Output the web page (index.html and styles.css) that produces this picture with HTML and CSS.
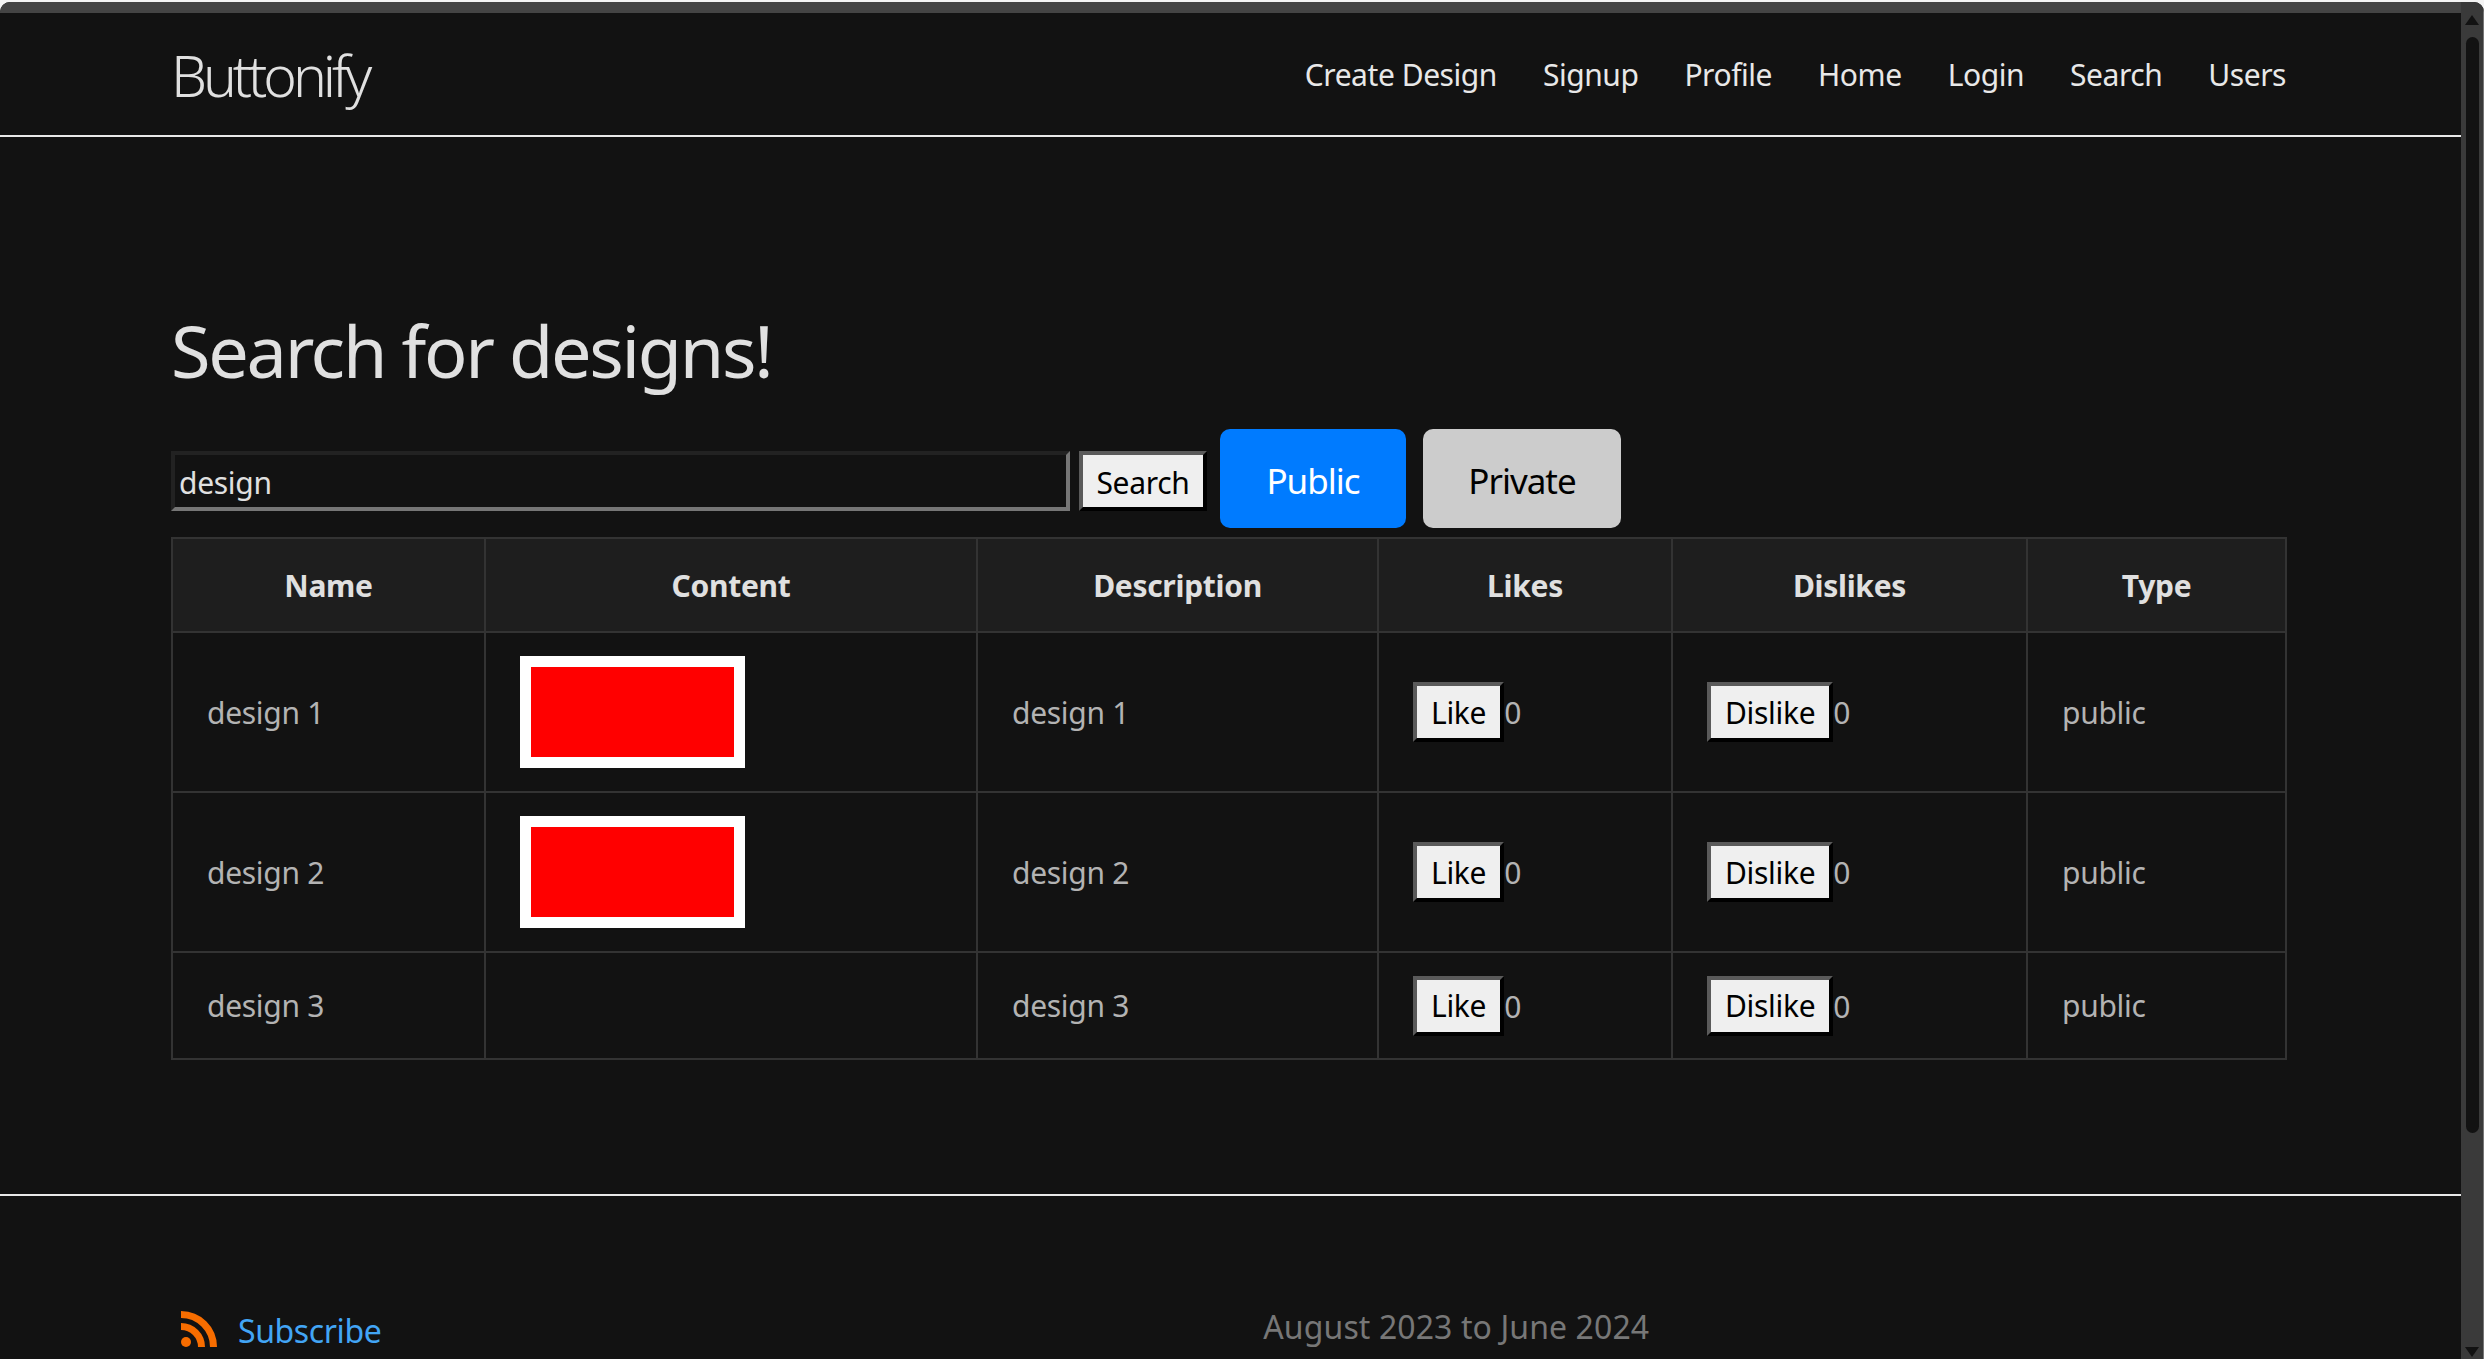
FILE: index.html
```html
<!DOCTYPE html>
<html lang="en">
<head>
<meta charset="utf-8">
<title>Buttonify</title>
<link rel="stylesheet" href="styles.css">
</head>
<body>
<div class="window">
  <div class="page">
    <div class="titlebar"></div>
    <header class="site-header">
      <a class="brand">Buttonify</a>
      <nav class="nav">
        <a>Create Design</a><a>Signup</a><a>Profile</a><a>Home</a><a>Login</a><a>Search</a><a>Users</a>
      </nav>
    </header>
    <main class="content">
      <h1 class="title">Search for designs!</h1>
      <div class="toolbar">
        <input class="search-input" type="text" value="design">
        <button class="native-btn">Search</button>
        <button class="filter filter-public">Public</button>
        <button class="filter filter-private">Private</button>
      </div>
      <table class="designs">
        <colgroup>
          <col class="c1"><col class="c2"><col class="c3"><col class="c4"><col class="c5"><col class="c6">
        </colgroup>
        <thead>
          <tr><th>Name</th><th>Content</th><th>Description</th><th>Likes</th><th>Dislikes</th><th>Type</th></tr>
        </thead>
        <tbody>
          <tr>
            <td>design 1</td>
            <td><div class="swatch"></div></td>
            <td>design 1</td>
            <td><button class="native-btn">Like</button><span class="count">0</span></td>
            <td><button class="native-btn">Dislike</button><span class="count">0</span></td>
            <td>public</td>
          </tr>
          <tr>
            <td>design 2</td>
            <td><div class="swatch"></div></td>
            <td>design 2</td>
            <td><button class="native-btn">Like</button><span class="count">0</span></td>
            <td><button class="native-btn">Dislike</button><span class="count">0</span></td>
            <td>public</td>
          </tr>
          <tr>
            <td>design 3</td>
            <td></td>
            <td>design 3</td>
            <td><button class="native-btn">Like</button><span class="count">0</span></td>
            <td><button class="native-btn">Dislike</button><span class="count">0</span></td>
            <td>public</td>
          </tr>
        </tbody>
      </table>
    </main>
    <footer class="site-footer">
      <a class="subscribe">
        <svg class="rss" viewBox="0 0 36 36" width="36" height="36" aria-hidden="true">
          <circle cx="5" cy="31" r="5" fill="#f76d00"/>
          <path d="M0 15.5 A20.5 20.5 0 0 1 20.5 36" fill="none" stroke="#f76d00" stroke-width="7"/>
          <path d="M0 3.5 A32.5 32.5 0 0 1 32.5 36" fill="none" stroke="#f76d00" stroke-width="7"/>
        </svg>
        <span class="subscribe-label">Subscribe</span>
      </a>
      <p class="dates">August 2023 to June 2024</p>
    </footer>
  </div>
  <aside class="scrollbar">
    <div class="arrow arrow-up"></div>
    <div class="thumb"></div>
    <div class="arrow arrow-down"></div>
  </aside>
</div>
</body>
</html>
```
FILE: styles.css
```css
* { box-sizing: border-box; }
html, body { margin: 0; height: 100%; overflow: hidden; background: #f4f4f4; }
body {
  padding-top: 2px;
  font-family: "Noto Sans", "Open Sans", sans-serif;
  font-size: 30px;
  color: #e0e0e0;
}
.window {
  height: 100%;
  display: flex;
  background: #121212;
  border-radius: 10px 10px 0 0;
  overflow: hidden;
}
.page { flex: 1; min-width: 0; display: flex; flex-direction: column; }
.titlebar { height: 11px; flex: none; background: #444; }

.site-header {
  height: 124px;
  flex: none;
  display: flex;
  justify-content: space-between;
  padding: 0 175px 0 171px;
  border-bottom: 2px solid #e8e8e8;
}
.brand {
  margin-top: 27px;
  font-size: 57px;
  font-weight: 300;
  line-height: 70px;
  height: 70px;
  letter-spacing: -4.1px;
  color: #e0e0e0;
}
.nav {
  display: flex;
  gap: 46px;
  margin-top: 39px;
  height: 46px;
  line-height: 46px;
  letter-spacing: -.45px;
  color: #e8e8e8;
}

.content { flex: none; height: 1057px; padding: 0 175px 0 171px; }
.title {
  margin: 0;
  padding-top: 165px;
  height: 292px;
  font-size: 72px;
  font-weight: 400;
  line-height: 96px;
  letter-spacing: -2.3px;
  color: #e0e0e0;
}
.toolbar { display: flex; align-items: flex-start; height: 99px; }
.search-input {
  width: 899px;
  height: 60px;
  margin: 22px 9px 0 0;
  padding: 2px 4px 0;
  border: 4px solid;
  border-color: #222 #767676 #767676 #222;
  background: #121212;
  color: #e0e0e0;
  font: inherit;
  letter-spacing: -.3px;
}
.native-btn {
  height: 60px;
  padding: 0 14px;
  border: 4px solid;
  border-color: #5a5a5a #000 #000 #5a5a5a;
  background: #efefef;
  color: #000;
  font: inherit;
  letter-spacing: -.3px;
}
.filter {
  height: 99px;
  padding: 4px 0 0;
  border: 0;
  border-radius: 10px;
  font: inherit;
  font-size: 35px;
  letter-spacing: -1px;
}
.toolbar .native-btn { width: 128px; padding: 2px 0 0; margin-top: 22px; }
.filter-public { width: 186px; margin-left: 13px; background: #007bff; color: #fff; }
.filter-private { width: 198px; margin-left: 17px; background: #ccc; color: #000; }

.designs {
  width: 2114px;
  margin-top: 9px;
  border-collapse: collapse;
  table-layout: fixed;
}
.c1 { width: 313px; }
.c2 { width: 492px; }
.c3 { width: 401px; }
.c4 { width: 294px; }
.c5 { width: 355px; }
.c6 { width: 259px; }
.designs th, .designs td { border: 2px solid #333; padding: 0 34px; letter-spacing: -.3px; }
.designs th { height: 94px; background: #1e1e1e; text-align: center; font-weight: 700; color: #e0e0e0; }
.designs td { height: 107px; color: #b3b3b3; vertical-align: middle; }
.designs tbody tr:nth-child(-n+2) td { height: 160px; }
.swatch { width: 225px; height: 112px; background: #f00; border: 11px solid #fff; }

.site-footer {
  flex: 1;
  display: flex;
  border-top: 2px solid #e8e8e8;
  padding: 0 175px 0 181px;
}
.subscribe {
  display: flex;
  align-items: flex-start;
  gap: 21px;
  margin-top: 115px;
  height: 36px;
  font-size: 32px;
  color: #42a5f5;
  letter-spacing: -.4px;
}
.subscribe-label { line-height: 40px; }
.rss { flex: none; }
.dates {
  margin: 108px 0 0 882px;
  font-size: 32px;
  line-height: 46px;
  color: #777;
  letter-spacing: .1px;
}

.scrollbar {
  width: 23px;
  flex: none;
  display: flex;
  flex-direction: column;
  align-items: center;
  background: #3a3a3a;
  border-right: 1px solid #777;
  padding: 13px 0 2px;
}
.arrow { width: 0; height: 0; flex: none; border-left: 7px solid transparent; border-right: 7px solid transparent; }
.arrow-up { border-bottom: 10px solid #121212; }
.arrow-down { border-top: 10px solid #121212; margin-top: auto; }
.thumb { width: 13px; height: 1096px; margin-top: 12px; background: #121212; border-radius: 7px; flex: none; }
```
